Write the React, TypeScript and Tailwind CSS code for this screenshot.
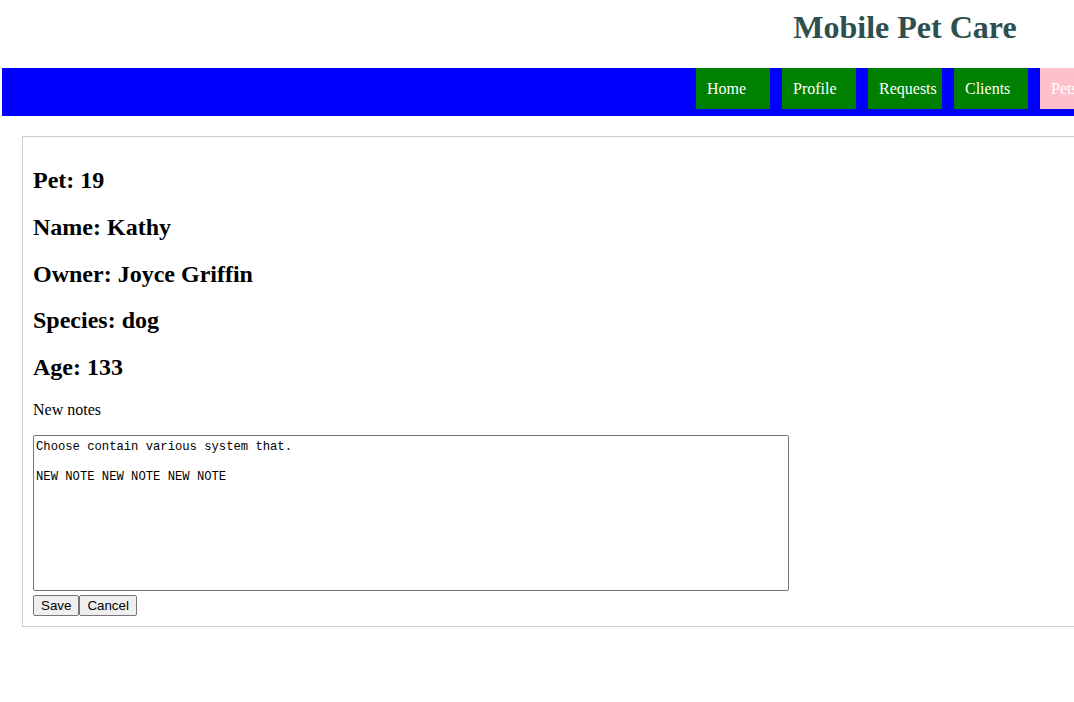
import React, { useState } from 'react';

const navItems = [
  { key: 'home', label: 'Home', active: false },
  { key: 'profile', label: 'Profile', active: false },
  { key: 'requests', label: 'Requests', active: false },
  { key: 'clients', label: 'Clients', active: false },
  { key: 'pets', label: 'Pets', active: true },
];

const details = [
  ['Pet', '19'],
  ['Name', 'Kathy'],
  ['Owner', 'Joyce Griffin'],
  ['Species', 'dog'],
  ['Age', '133'],
];

export default function App() {
  const [notes, setNotes] = useState('Choose contain various system that.\n\nNEW NOTE NEW NOTE NEW NOTE');

  return (
    <div className="w-[1074px] h-[702px] overflow-hidden bg-white font-['Liberation_Serif',serif] text-black">
      <div className="w-[1810px]">
        <h1 className="h-[68px] pt-[9px] text-center text-[32px] leading-[37px] font-bold text-[#2f4f4f]">
          Mobile Pet Care
        </h1>

        <nav className="ml-[2px] w-[1806px] h-[48px] bg-[#0000ff] flex justify-center items-start gap-[12px]">
          {navItems.map((item) => (
            <a
              key={item.key}
              href="#"
              className={`w-[74px] h-[41px] pl-[11px] flex items-center text-[16px] text-white ${
                item.active ? 'bg-[#ffc0cb]' : 'bg-[#008000]'
              }`}
            >
              {item.label}
            </a>
          ))}
        </nav>

        <div className="ml-[22px] mt-[20px] w-[1766px] border border-[#cccccc] px-[10px] pt-[10px] pb-[10px]">
          {details.map(([label, value]) => (
            <h2 key={label} className="mt-[20px] text-[24px] leading-[26.8px] font-bold">
              {label}: {value}
            </h2>
          ))}

          <p className="mt-[20px] text-[16px] leading-[18px]">New notes</p>

          <textarea
            value={notes}
            onChange={(event) => setNotes(event.target.value)}
            className="block mt-[16px] w-[756px] h-[156px] resize-none border border-[#767676] rounded-[2px] px-[2px] pt-[4px] pb-[2px] font-['Liberation_Mono',monospace] text-[12.2px] leading-[15px] text-black outline-none"
          />

          <div className="flex mt-[4px]">
            <button className="px-[7px] py-[2px] bg-[#efefef] border border-[#767676] rounded-[2px] font-['Liberation_Sans',Arial,sans-serif] text-[13.33px] leading-[15px]">
              Save
            </button>
            <button className="px-[7px] py-[2px] bg-[#efefef] border border-[#767676] rounded-[2px] font-['Liberation_Sans',Arial,sans-serif] text-[13.33px] leading-[15px]">
              Cancel
            </button>
          </div>
        </div>
      </div>
    </div>
  );
}
